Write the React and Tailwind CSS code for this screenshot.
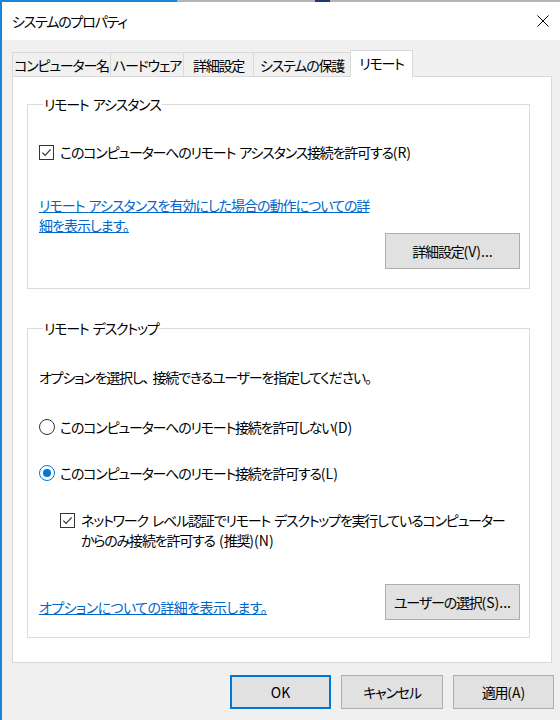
import React from "react";

function L({ children }) {
  return <span className="tracking-normal">{children}</span>;
}

function Sp() {
  return <span className="tracking-[1px]"> </span>;
}

function Check() {
  return (
    <span className="w-[15px] h-[15px] border border-[#333333] bg-white flex items-center justify-center shrink-0">
      <svg width="11" height="11" viewBox="0 0 11 11">
        <path d="M1.3 5.6 L4.1 8.4 L9.7 2.4" stroke="#333333" fill="none" strokeWidth="1.2" />
      </svg>
    </span>
  );
}

function Radio({ on }) {
  return on ? (
    <span className="w-[16px] h-[16px] rounded-full border border-[#0078d7] bg-white flex items-center justify-center shrink-0">
      <span className="w-[8px] h-[8px] rounded-full bg-[#0078d7]" />
    </span>
  ) : (
    <span className="w-[16px] h-[16px] rounded-full border border-[#333333] bg-white shrink-0" />
  );
}

function Tab({ label, w, sel, last }) {
  if (sel) {
    return (
      <div
        className={`h-[27px] ${w} bg-white border border-b-0 border-[#d9d9d9] relative z-10 flex items-center justify-center pb-[2px] whitespace-nowrap`}
      >
        {label}
      </div>
    );
  }
  return (
    <div
      className={`h-[25px] ${w} bg-[#f0f0f0] border-t border-l border-b border-[#d9d9d9] ${last ? "border-r" : ""} flex items-center justify-center whitespace-nowrap`}
    >
      {label}
    </div>
  );
}

function Btn({ children, w, def }) {
  return (
    <div
      className={`${w} h-[34px] bg-[#e1e1e1] ${def ? "border-2 border-[#0078d7]" : "border border-[#adadad]"} flex items-center justify-center text-black whitespace-nowrap`}
    >
      {children}
    </div>
  );
}

export default function App() {
  return (
    <div className="w-[560px] h-[720px] bg-[#f0f0f0] flex flex-col overflow-hidden font-['Noto_Sans_CJK_JP',sans-serif] [font-feature-settings:'palt'] text-[14px] leading-[20px] tracking-[-1.2px] text-black">
      {/* top strip from window behind */}
      <div className="h-[2px] flex shrink-0">
        <div className="w-[177px] bg-[#1a84d8]" />
        <div className="w-[138px] bg-[#b4b4b4]" />
        <div className="w-[15px] bg-[#1d3a6a]" />
        <div className="flex-1 bg-[#b4b4b4]" />
      </div>
      <div className="flex flex-1">
        <div className="w-[2px] bg-[#1a84d8] shrink-0" />
        <div className="flex-1 flex flex-col">
          {/* title bar */}
          <div className="h-[38px] bg-white flex items-center justify-between pl-[10px] pr-[11px]">
            <span className="whitespace-nowrap">システムのプロパティ</span>
            <svg width="12" height="12" viewBox="0 0 12 12">
              <path d="M0.5 0.5 L11.5 11.5 M11.5 0.5 L0.5 11.5" stroke="#000" strokeWidth="1" fill="none" />
            </svg>
          </div>

          <div className="pl-[10px] pt-[10px] flex flex-col">
            {/* tabs */}
            <div className="flex items-end -mb-px relative">
              <Tab label="コンピューター名" w="w-[98px]" />
              <Tab label="ハードウェア" w="w-[73px]" />
              <Tab label="詳細設定" w="w-[70px]" />
              <Tab label="システムの保護" w="w-[97px]" />
              <Tab label="リモート" w="w-[63px]" sel />
            </div>

            {/* panel */}
            <div className="w-[540px] bg-white border border-[#d9d9d9] pl-[14px] pt-[17px] pb-[24px] flex flex-col">
              <fieldset className="w-[503px] border border-[#dcdcdc] pl-[11px] pr-[9px] pb-[19px] flex flex-col">
                <legend className="ml-[4px] px-[1px] leading-[20px] whitespace-nowrap">
                  リモート<Sp />アシスタンス
                </legend>
                <div className="mt-[28px] flex items-center gap-[6px]">
                  <Check />
                  <span className="whitespace-nowrap">
                    このコンピューターへのリモート<Sp />アシスタンス接続を許可する<L>(R)</L>
                  </span>
                </div>
                <div className="mt-[33px] text-[#0066cc] underline whitespace-nowrap tracking-[-1px]">
                  リモート<Sp />アシスタンスを有効にした場合の動作についての詳
                  <br />
                  細を表示します。
                </div>
                <div className="self-end -mt-[2px]">
                  <div className="w-[135px] h-[36px] bg-[#e1e1e1] border border-[#adadad] flex items-center justify-center whitespace-nowrap">
                    詳細設定<L>(V)...</L>
                  </div>
                </div>
              </fieldset>

              <fieldset className="mt-[29px] w-[503px] border border-[#dcdcdc] pl-[11px] pr-[9px] pb-[17px] flex flex-col">
                <legend className="ml-[4px] px-[1px] leading-[20px] whitespace-nowrap">
                  リモート<Sp />デスクトップ
                </legend>
                <div className="mt-[29px] whitespace-nowrap">
                  オプションを選択し、<Sp />接続できるユーザーを指定してください。
                </div>
                <div className="mt-[30px] flex items-center gap-[5px]">
                  <Radio />
                  <span className="whitespace-nowrap">
                    このコンピューターへのリモート接続を許可しない<L>(D)</L>
                  </span>
                </div>
                <div className="mt-[26px] flex items-center gap-[5px]">
                  <Radio on />
                  <span className="whitespace-nowrap">
                    このコンピューターへのリモート接続を許可する<L>(L)</L>
                  </span>
                </div>
                <div className="mt-[27px] ml-[21px] flex items-start gap-[6px]">
                  <div className="mt-[3px]">
                    <Check />
                  </div>
                  <span className="whitespace-nowrap">
                    ネットワーク<Sp />レベル認証でリモート<Sp />デスクトップを実行しているコンピューター
                    <br />
                    からのみ接続を許可する<Sp /><L>(</L>推奨<L>)(N)</L>
                  </span>
                </div>
                <div className="mt-[34px] flex items-end justify-between">
                  <span className="mb-[3px] text-[#0066cc] underline whitespace-nowrap tracking-[-0.6px]">
                    オプションについての詳細を表示します。
                  </span>
                  <div className="w-[135px] h-[36px] bg-[#e1e1e1] border border-[#adadad] flex items-center justify-center whitespace-nowrap">
                    ユーザーの選択<L>(S)...</L>
                  </div>
                </div>
              </fieldset>
            </div>

            {/* bottom buttons */}
            <div className="mt-[12px] flex justify-end gap-[10px] pr-[6px]">
              <Btn w="w-[101px]" def>
                <L>OK</L>
              </Btn>
              <Btn w="w-[102px]">キャンセル</Btn>
              <Btn w="w-[101px]">
                適用<L>(A)</L>
              </Btn>
            </div>
          </div>
        </div>
      </div>
    </div>
  );
}
